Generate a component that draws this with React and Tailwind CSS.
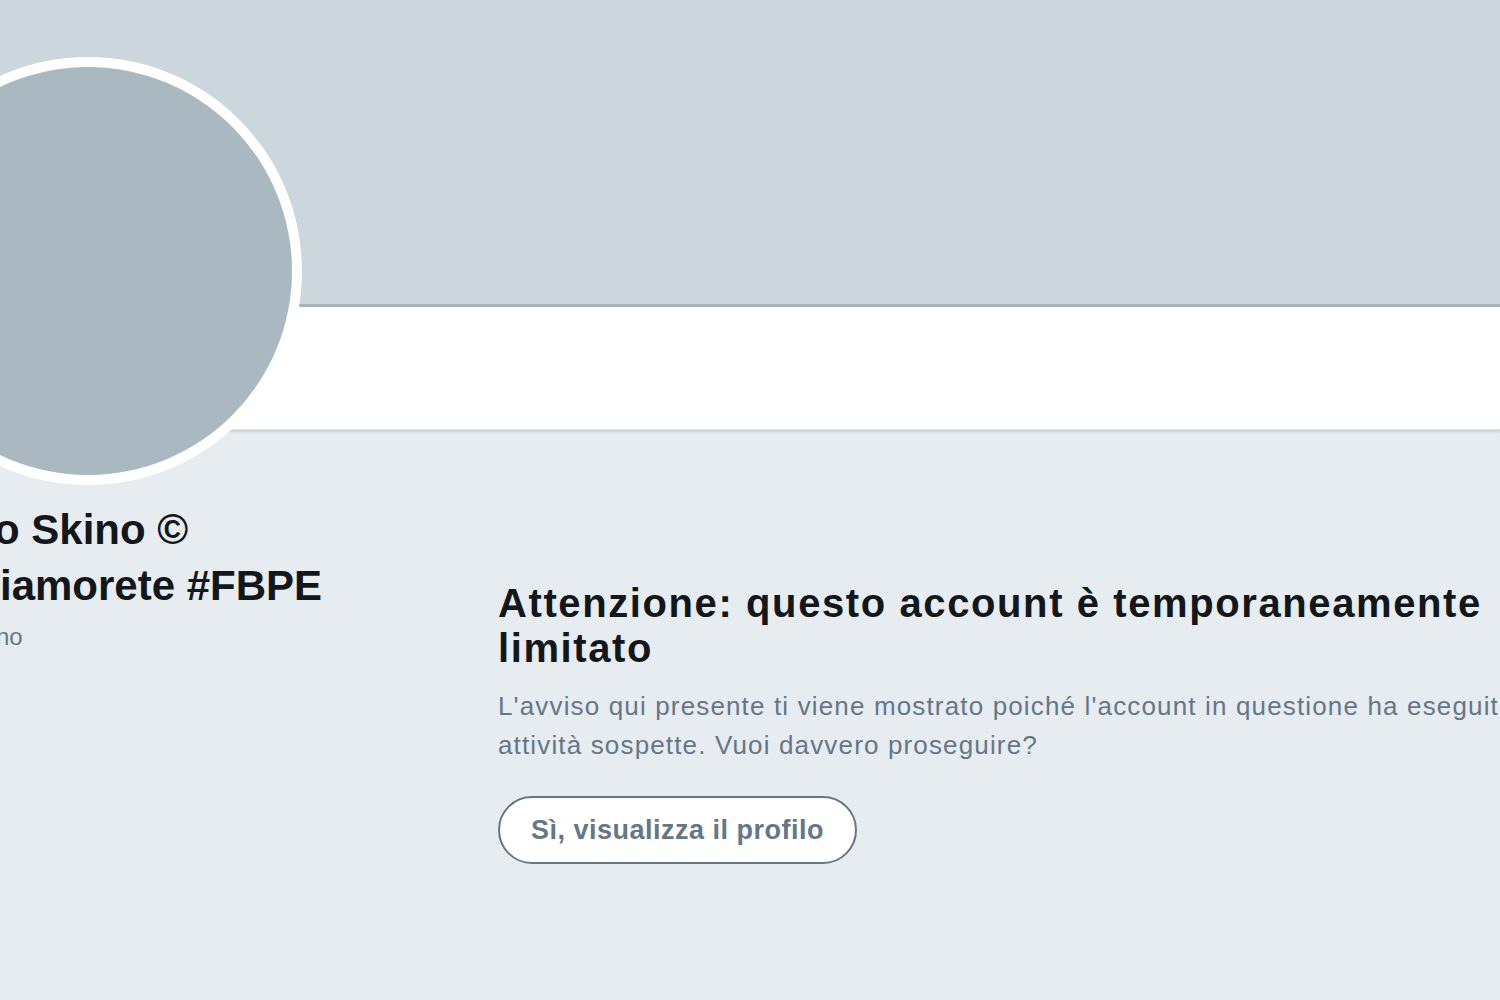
import React from 'react';

export default function App() {
  return (
    <div
      className="relative w-[1500px] h-[1000px] overflow-hidden bg-[#e6ecf0] text-[#14171a]"
      style={{ fontFamily: '"Liberation Sans", Arial, sans-serif' }}
    >
      {/* header banner */}
      <div className="h-[307px] bg-[#ccd6dd] border-b-[3px] border-[#aab3ba]" />
      {/* nav strip */}
      <div className="h-[123px] bg-white border-b border-[#dde3e8] shadow-[0_2px_2px_rgba(0,0,0,0.12)]" />

      {/* avatar */}
      <div className="absolute left-[-126px] top-[57px] w-[428px] h-[428px] rounded-full bg-white p-[10px]">
        <div className="w-full h-full rounded-full bg-[#aab8c2]" />
      </div>

      <div className="flex">
        <div className="w-[504px] shrink-0 pt-[72px] ml-[-6px]">
          <div className="text-[42px] leading-[56px] font-bold whitespace-nowrap">
            <div>o Skino ©</div>
            <div className="ml-[6px]">iamorete #FBPE</div>
          </div>
          <div className="mt-[8px] ml-[2px] text-[24px] leading-[30px] text-[#657786]">no</div>
        </div>

        <div className="w-[1100px] shrink-0 pt-[151px]">
          <h1 className="text-[40px] leading-[45px] font-bold tracking-[1.6px] w-[1020px]">
            Attenzione: questo account è temporaneamente limitato
          </h1>
          <p className="mt-[16px] text-[26px] leading-[39px] tracking-[1.15px] text-[#657786] whitespace-nowrap">
            L'avviso qui presente ti viene mostrato poiché l'account in questione ha eseguito
            <br />
            attività sospette. Vuoi davvero proseguire?
          </p>
          <button className="mt-[31px] w-[359px] h-[68px] rounded-full bg-white border-2 border-[#657786] text-[27px] tracking-[0.5px] font-bold text-[#657786]">
            Sì, visualizza il profilo
          </button>
        </div>
      </div>
    </div>
  );
}
